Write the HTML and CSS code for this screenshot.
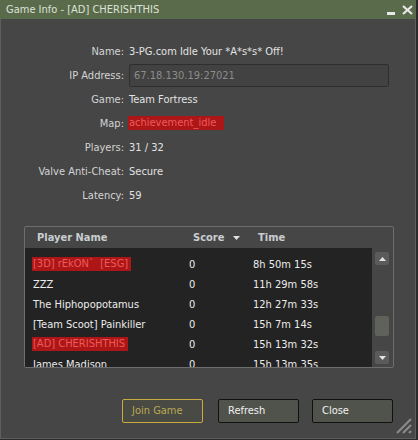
FILE: index.html
```html
<!DOCTYPE html>
<html lang="en">
<head>
    <meta charset="UTF-8">
    <title>Game Info - [AD] CHERISHTHIS</title>
    <link rel="stylesheet" href="styles.css">
</head>
<body>
    <div class="window">
        <div class="titlebar">
            <span class="title">Game Info - [AD] CHERISHTHIS</span>
            <div class="title-controls">
                <svg class="ctl-min" width="8" height="3" viewBox="0 0 8 3"><rect width="8" height="3" fill="#e8e8e8"/></svg>
                <svg class="ctl-close" width="11" height="10" viewBox="0 0 11 10"><path d="M1 1 L10 9 M10 1 L1 9" stroke="#e8e8e8" stroke-width="2.2"/></svg>
            </div>
        </div>

        <div class="content">
            <div class="info">
                <div class="label">Name:</div>
                <div class="value">3-PG.com Idle Your *A*s*s* Off!</div>

                <div class="label">IP Address:</div>
                <div class="value"><div class="ip-box">67.18.130.19:27021</div></div>

                <div class="label">Game:</div>
                <div class="value">Team Fortress</div>

                <div class="label">Map:</div>
                <div class="value"><span class="hl map-hl">achievement_idle</span></div>

                <div class="label">Players:</div>
                <div class="value">31 / 32</div>

                <div class="label">Valve Anti-Cheat:</div>
                <div class="value">Secure</div>

                <div class="label">Latency:</div>
                <div class="value">59</div>
            </div>

            <div class="players">
                <div class="players-head">
                    <span>Player Name</span>
                    <span class="sorted">Score <svg width="7" height="4" viewBox="0 0 7 4"><path d="M0 0 H7 L3.5 4 Z" fill="#e0e0e0"/></svg></span>
                    <span>Time</span>
                </div>
                <div class="players-body">
                    <div class="players-list">
                        <div class="prow"><span><span class="hl">[3D] rEkON`&nbsp; [ESG]</span></span><span>0</span><span>8h 50m 15s</span></div>
                        <div class="prow"><span>ZZZ</span><span>0</span><span>11h 29m 58s</span></div>
                        <div class="prow"><span>The Hiphopopotamus</span><span>0</span><span>12h 27m 33s</span></div>
                        <div class="prow"><span>[Team Scoot] Painkiller</span><span>0</span><span>15h 7m 14s</span></div>
                        <div class="prow"><span><span class="hl">[AD] CHERISHTHIS</span></span><span>0</span><span>15h 13m 32s</span></div>
                        <div class="prow"><span>James Madison</span><span>0</span><span>15h 13m 35s</span></div>
                    </div>
                    <div class="scrollbar">
                        <div class="sb-btn sb-up"><svg width="7" height="4" viewBox="0 0 7 4"><path d="M3.5 0 L7 4 H0 Z" fill="#e4e4e4"/></svg></div>
                        <div class="sb-thumb"></div>
                        <div class="sb-btn sb-down"><svg width="7" height="4" viewBox="0 0 7 4"><path d="M0 0 H7 L3.5 4 Z" fill="#e4e4e4"/></svg></div>
                    </div>
                </div>
            </div>

            <div class="buttons">
                <button class="btn btn-join">Join Game</button>
                <button class="btn btn-refresh">Refresh</button>
                <button class="btn">Close</button>
            </div>
        </div>

        <svg class="grip" width="18" height="18" viewBox="0 0 18 18">
            <path d="M2 16 L16 2 M8 16 L16 8 M14 16 L16 14" stroke="#8a8a8a" stroke-width="2.2"/>
        </svg>
    </div>
</body>
</html>
```

FILE: styles.css
```css
body {
    margin: 0;
    background: #2b2b2b;
    font-family: "DejaVu Sans", Verdana, sans-serif;
    font-size: 11px;
    font-stretch: semi-condensed;
    color: #dcdcdc;
}
.window {
    position: relative;
    width: 416px;
    height: 439px;
    box-sizing: border-box;
    background: #464646;
    border: 1px solid #5e5e5e;
    border-top: none;
}
.titlebar {
    height: 19px;
    background: #5a6b4c;
    display: flex;
    align-items: center;
    justify-content: space-between;
    padding: 0 3px 0 6px;
    margin: 0 -1px;
}
.title {
    color: #dde2d8;
}
.title-controls {
    display: flex;
    align-items: center;
    gap: 7px;
}
.ctl-min {
    margin-top: 8px;
}
.content {
    padding-top: 20px;
}
.info {
    display: grid;
    grid-template-columns: 123px 1fr;
    grid-auto-rows: 24px;
    column-gap: 5px;
    align-items: center;
}
.label {
    text-align: right;
    color: #d4d4d4;
}
.value {
    color: #e2e2e2;
}
.ip-box {
    width: 260px;
    height: 23px;
    box-sizing: border-box;
    border: 1px solid #2e2e2e;
    border-radius: 2px;
    background: #424242;
    color: #8c8c8c;
    padding: 4px 0 0 4px;
}
.hl {
    display: inline-block;
    background: #ad1616;
    color: #ef5a5a;
    line-height: 14px;
    padding: 0 3px 0 1px;
    margin-left: -1px;
}
.map-hl {
    padding-right: 8px;
}
.players {
    margin: 19px 0 0 23px;
    width: 370px;
    height: 142px;
    box-sizing: border-box;
    border: 1px solid #6e6e6e;
    border-radius: 2px;
    display: flex;
    flex-direction: column;
}
.players-head {
    height: 21px;
    flex: none;
    display: grid;
    grid-template-columns: 156px 65px 1fr;
    align-items: center;
    padding-left: 12px;
    font-weight: bold;
    color: #c9cdd0;
}
.sorted svg {
    margin-left: 5px;
    vertical-align: middle;
}
.players-body {
    flex: 1;
    display: flex;
    min-height: 0;
}
.players-list {
    width: 347px;
    background: #232323;
    padding-top: 6px;
    overflow: hidden;
}
.prow {
    height: 20px;
    display: grid;
    grid-template-columns: 156px 64px 1fr;
    align-items: center;
    padding-left: 8px;
    color: #ececec;
    white-space: nowrap;
}
.scrollbar {
    flex: 1;
    display: flex;
    flex-direction: column;
    align-items: flex-start;
    padding: 4px 0 0 3px;
}
.sb-btn,
.sb-thumb {
    width: 14px;
    background: #5b5b5b;
    border-radius: 2px;
}
.sb-btn {
    height: 13px;
    display: flex;
    align-items: center;
    justify-content: center;
}
.sb-thumb {
    height: 20px;
    margin-top: 51px;
    background: #5f615b;
}
.sb-down {
    margin-top: 15px;
}
.buttons {
    display: flex;
    justify-content: flex-end;
    padding-right: 22px;
    margin-top: 31px;
}
.btn {
    width: 81px;
    height: 24px;
    box-sizing: border-box;
    background: #50534b;
    border: 1px solid #111;
    border-radius: 2px;
    color: #f0f0f0;
    font: inherit;
    text-align: left;
    padding: 0 0 1px 9px;
}
.btn-join {
    margin-right: 15px;
    background: #4a4a44;
    border-color: #c9ab3e;
    color: #b9a952;
}
.btn-refresh {
    margin-right: 13px;
}
.grip {
    position: absolute;
    right: 2px;
    bottom: 3px;
}
```
